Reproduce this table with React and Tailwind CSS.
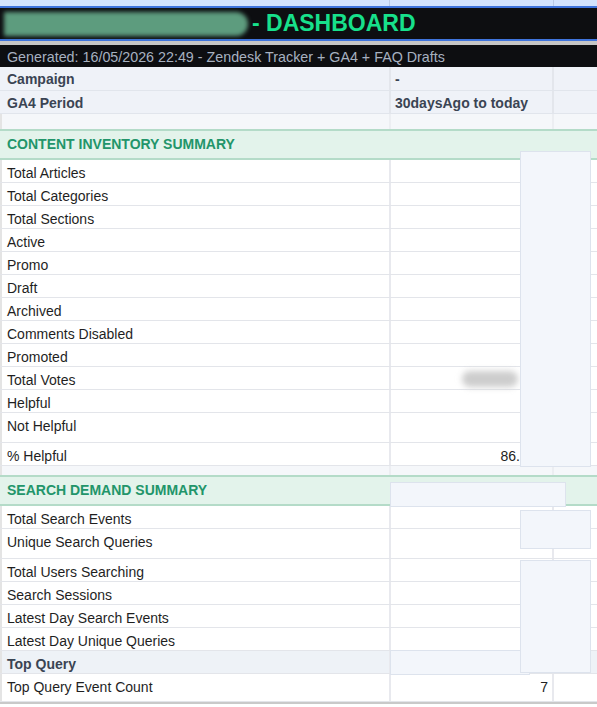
import React from "react";

const inventory = [
  { label: "Total Articles" },
  { label: "Total Categories" },
  { label: "Total Sections" },
  { label: "Active" },
  { label: "Promo" },
  { label: "Draft" },
  { label: "Archived" },
  { label: "Comments Disabled" },
  { label: "Promoted" },
  { label: "Total Votes", blur: true },
  { label: "Helpful" },
  { label: "Not Helpful", tall: true },
  { label: "% Helpful", value: "86.21%" },
];

const search = [
  { label: "Total Search Events" },
  { label: "Unique Search Queries", tall: true },
  { label: "Total Users Searching" },
  { label: "Search Sessions" },
  { label: "Latest Day Search Events" },
  { label: "Latest Day Unique Queries" },
  { label: "Top Query", bold: true, shade: true },
  { label: "Top Query Event Count", value: "7", last: true },
];

const Row = ({ label, value, tall, last, bold, shade, blur }) => (
  <div
    className={`flex border-b border-[#e3e5ea] ${
      tall ? "h-[30px]" : last ? "h-[28px]" : "h-[23px]"
    } ${shade ? "bg-[#eef2f7]" : "bg-white"}`}
  >
    <div
      className={`w-[391px] pl-[5px] pt-[2px] leading-[22px] border-l-2 border-r-2 border-l-[#e4e4e4] border-r-[#e8e9ee] ${
        bold ? "font-bold text-[#3a4453]" : "text-[#1f1f1f]"
      }`}
    >
      {label}
    </div>
    <div className="w-[163px] pr-[4px] pt-[2px] leading-[22px] text-right text-[#222] border-r-2 border-[#e8e9ee] flex justify-end items-start">
      {blur && (
        <span className="mt-[2px] mr-[30px] inline-block w-[56px] h-[16px] rounded-full bg-[#cdcdcd] blur-[3px]" />
      )}
      {value}
    </div>
    <div className="flex-1" />
  </div>
);

const SectionHeader = ({ title }) => (
  <div className="h-[31px] border-y-2 border-[#b4dbc8] bg-[#e3f3eb] pl-[7px] pt-[2px] leading-[23px] font-bold text-[#22956a]">
    {title}
  </div>
);

const Blank = ({ h }) => (
  <div className={`flex ${h} bg-[#f5f7fa]`}>
    <div className="w-[389px] border-l-2 border-[#e4e4e4]" />
    <div className="w-[165px] border-l-2 border-r-2 border-[#eceef2]" />
  </div>
);

export default function App() {
  return (
    <div
      className="relative w-[597px] h-[707px] overflow-hidden bg-white text-[14px]"
      style={{ fontFamily: '"Liberation Sans", Arial, sans-serif' }}
    >
      {/* column header strip */}
      <div className="flex h-[6px] bg-[#d3e3fd]">
        <div className="w-[390px] border-r border-[#b9c9e6]" />
        <div className="w-[164px] border-r border-[#b9c9e6]" />
      </div>

      {/* title */}
      <div className="flex items-center h-[35px] border-y-2 border-[#3f74dc] bg-[#0d0e11]">
        <div className="ml-[4px] w-[244px] h-[24px] rounded-r-full bg-[#5d9c7e] blur-[2px]" />
        <span className="ml-[4px] text-[23px] font-bold text-[#17e08b] leading-none">
          - DASHBOARD
        </span>
      </div>
      <div className="h-[4px] bg-[#c6c6c6]" />

      {/* generated */}
      <div className="h-[22px] bg-[#0d0e11] pl-[7px] pt-[1px] leading-[22px] text-[14.3px] text-[#a7b1c0]">
        Generated: 16/05/2026 22:49 - Zendesk Tracker + GA4 + FAQ Drafts
      </div>

      {/* meta rows */}
      {[
        ["Campaign", "-", "h-[24px]"],
        ["GA4 Period", "30daysAgo to today", "h-[23px]"],
      ].map(([k, v, h]) => (
        <div
          key={k}
          className={`flex ${h} bg-[#eff2f8] border-b border-[#e1e5ec] font-bold text-[#3a4453]`}
        >
          <div className="w-[391px] pl-[7px] pt-[1px] leading-[23px] border-r-2 border-[#e3e6ec]">{k}</div>
          <div className="w-[163px] pl-[4px] pt-[1px] leading-[23px] border-r-2 border-[#e3e6ec]">{v}</div>
          <div className="flex-1" />
        </div>
      ))}

      <Blank h="h-[15px]" />
      <SectionHeader title="CONTENT INVENTORY SUMMARY" />
      {inventory.map((r) => (
        <Row key={r.label} {...r} />
      ))}

      <Blank h="h-[9px]" />
      <SectionHeader title="SEARCH DEMAND SUMMARY" />
      {search.map((r) => (
        <Row key={r.label} {...r} />
      ))}
      <div className="h-[2px] bg-[#c9c9c9]" />

      {/* redaction boxes */}
      <div className="absolute left-[520px] top-[151px] w-[71px] h-[316px] bg-[#f3f6fb] border border-[#dde3ed]" />
      <div className="absolute left-[390px] top-[482px] w-[176px] h-[25px] bg-[#f3f6fb] border border-[#dde3ed]" />
      <div className="absolute left-[520px] top-[510px] w-[71px] h-[39px] bg-[#f3f6fb] border border-[#dde3ed]" />
      <div className="absolute left-[390px] top-[650px] w-[140px] h-[25px] bg-[#f3f6fb] border border-[#dde3ed]" />
      <div className="absolute left-[520px] top-[560px] w-[71px] h-[113px] bg-[#f3f6fb] border border-[#dde3ed]" />
    </div>
  );
}
